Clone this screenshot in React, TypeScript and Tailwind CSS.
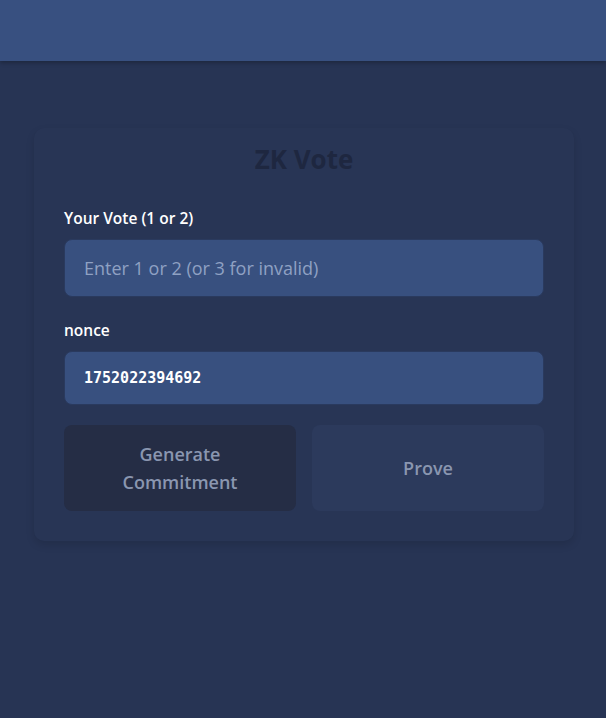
import React from "react";

export default function App() {
  return (
    <div
      className="min-h-[718px] bg-[#273454] flex flex-col"
      style={{ fontFamily: '"Open Sans", "Noto Sans", sans-serif' }}
    >
      <div className="h-[61px] bg-[#385080] shadow-[0_2px_4px_rgba(0,0,0,0.25)]" />
      <div className="px-[34px] pt-[67px]">
        <div className="w-[540px] bg-[#283555] rounded-[10px] shadow-[0_4px_8px_rgba(0,0,0,0.12)] px-[30px] pt-[14px] pb-[30px]">
          <h1 className="text-center text-[26px] font-bold text-[#1e2740] leading-[34px] mb-[31px]">
            ZK Vote
          </h1>
          <label className="block text-[15.5px] font-semibold text-white leading-[22px] mb-[10px]">
            Your Vote (1 or 2)
          </label>
          <input
            className="w-full h-[58px] rounded-[8px] bg-[#38507f] border border-[#2a3a5e] px-[19px] text-[18px] text-white placeholder:text-[#8fa1c3] outline-none"
            placeholder="Enter 1 or 2 (or 3 for invalid)"
          />
          <label className="block text-[15.5px] font-semibold text-white leading-[22px] mt-[22px] mb-[10px]">
            nonce
          </label>
          <div
            className="w-full h-[54px] rounded-[8px] bg-[#38507f] border border-[#2a3a5e] px-[19px] flex items-center text-[15px] font-bold text-white"
            style={{ fontFamily: '"DejaVu Sans Mono", monospace' }}
          >
            1752022394692
          </div>
          <div className="grid grid-cols-2 gap-[16px] mt-[20px]">
            <button className="h-[86px] rounded-[8px] bg-[#252d45] text-[#8a96b0] text-[18px] font-semibold leading-[28px] px-4">
              Generate
              <br />
              Commitment
            </button>
            <button className="h-[86px] rounded-[8px] bg-[#2c3a5c] text-[#8a96b0] text-[18px] font-semibold leading-[28px] px-4">
              Prove
            </button>
          </div>
        </div>
      </div>
    </div>
  );
}
